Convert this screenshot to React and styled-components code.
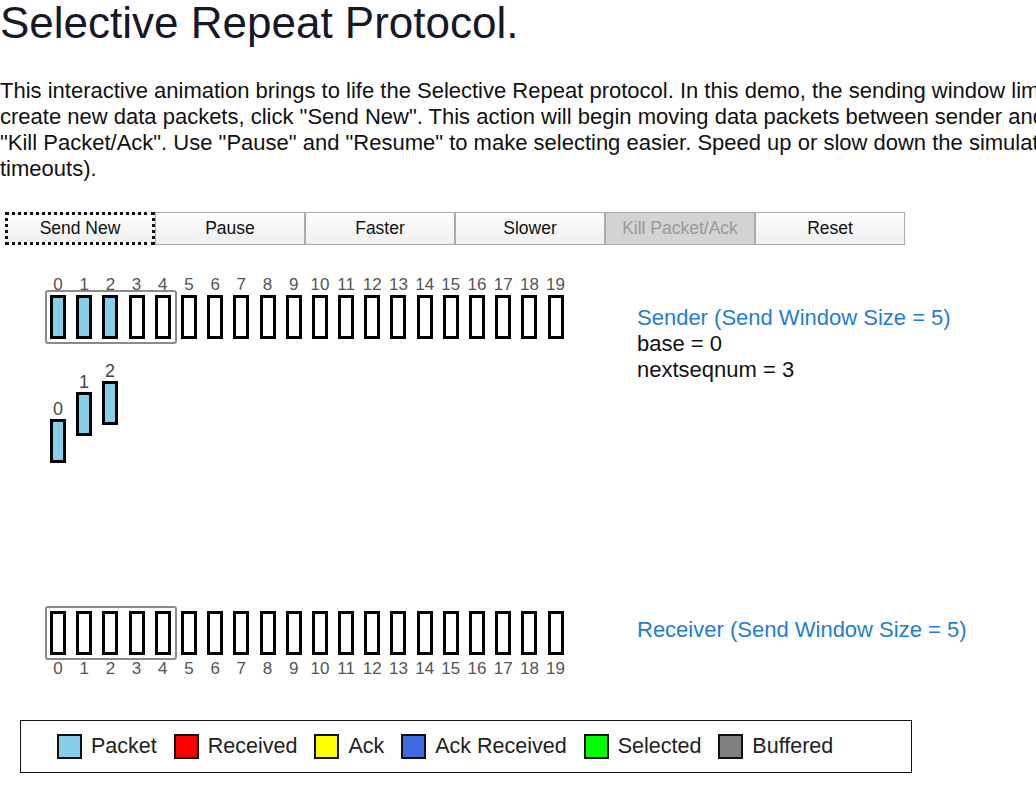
import React from "react";
import styled, { createGlobalStyle } from "styled-components";

const Global = createGlobalStyle`
  html, body { margin: 0; padding: 0; background: #fff; overflow: hidden; }
  body { font-family: "Liberation Sans", Arial, sans-serif; color: #111; }
`;

const Page = styled.div`
  width: 1036px;
  display: flex;
  flex-direction: column;
`;

const Title = styled.h1`
  margin: 0;
  font-size: 44px;
  line-height: 46px;
  font-weight: 400;
  color: #17172a;
  white-space: nowrap;
`;

const Intro = styled.p`
  margin: 32px 0 0;
  font-size: 22px;
  line-height: 26px;
  color: #111;
`;

const Line = styled.span`
  display: block;
  white-space: nowrap;
`;

const Toolbar = styled.div`
  display: flex;
  margin: 30px 0 0 5px;
`;

const Button = styled.button`
  width: 150px;
  height: 33px;
  box-sizing: border-box;
  margin: 0;
  padding: 0;
  font-family: "Liberation Sans", Arial, sans-serif;
  font-size: 17.5px;
  color: ${(p) => (p.disabled ? "#9a9a9a" : "#111")};
  background: ${(p) =>
    p.disabled ? "#d3d3d3" : "linear-gradient(#fdfdfd, #efefef)"};
  border: ${(p) => (p.focused ? "3px dotted #111" : "1px solid #ababab")};
  cursor: default;
`;

const Sim = styled.div`
  margin-top: 31px;
  padding-left: 45px;
  display: flex;
  flex-direction: column;
`;

const Row = styled.div`
  display: flex;
  align-items: flex-start;
`;

const Track = styled.div`
  width: 592px;
  display: flex;
  flex-direction: column;
`;

const Numbers = styled.div`
  display: flex;
  gap: 10.2px;
  padding-left: 5px;
  height: 18px;
  margin: ${(p) => (p.below ? "0" : "0 0 -4px")};
  position: relative;
  z-index: 1;
`;

const Num = styled.span`
  width: 16px;
  display: flex;
  justify-content: center;
  white-space: nowrap;
  font-size: 17px;
  line-height: 18px;
  color: #555;
`;

const Slots = styled.div`
  position: relative;
  display: flex;
  gap: 10.2px;
  padding: 5px 0 5px 5px;
`;

const WindowFrame = styled.div`
  position: absolute;
  left: 0;
  top: 0;
  width: 132px;
  height: 54px;
  box-sizing: border-box;
  border: 2px solid #8a8a8a;
  border-radius: 3px;
`;

const Slot = styled.div`
  width: 16px;
  height: 44px;
  box-sizing: border-box;
  border: 3px solid #000;
  background: ${(p) => p.fill || "#fff"};
`;

const Info = styled.div`
  margin-top: ${(p) => p.offset}px;
  font-size: 22px;
  line-height: 26px;
  color: #111;
  white-space: nowrap;
`;

const InfoTitle = styled.div`
  color: #1f7dd6;
`;

const Flight = styled.div`
  position: relative;
  height: 223px;
`;

const Packet = styled.div`
  position: absolute;
  display: flex;
  flex-direction: column;
  align-items: center;
  width: 16px;
`;

const PacketLabel = styled.span`
  font-size: 18px;
  line-height: 18px;
  height: 18px;
  margin-bottom: 1px;
  color: #444;
`;

const Legend = styled.div`
  margin: 42px 0 0 20px;
  width: 892px;
  height: 53px;
  box-sizing: border-box;
  border: 1px solid #111;
  display: flex;
  align-items: center;
  padding-left: 36px;
  gap: 17px;
`;

const LegendItem = styled.div`
  display: flex;
  align-items: center;
  gap: 9px;
  font-size: 21.5px;
  color: #222;
`;

const Swatch = styled.span`
  width: 25px;
  height: 25px;
  box-sizing: border-box;
  border: 2px solid #111;
  background: ${(p) => p.color};
`;

const SKY = "#87ceeb";
const idx = Array.from({ length: 20 }, (_, i) => i);

const legend = [
  ["Packet", SKY],
  ["Received", "#ff0000"],
  ["Ack", "#ffff00"],
  ["Ack Received", "#4169e1"],
  ["Selected", "#00ff00"],
  ["Buffered", "#808080"],
];

const flight = [
  { n: 0, left: 5, top: 17 },
  { n: 1, left: 31, top: -10 },
  { n: 2, left: 57, top: -21 },
];

const buttons = ["Send New", "Pause", "Faster", "Slower", "Kill Packet/Ack", "Reset"];

export default function App() {
  return (
    <Page>
      <Global />
      <Title>Selective Repeat Protocol.</Title>
      <Intro>
        <Line>
          This interactive animation brings to life the Selective Repeat protocol. In this demo, the sending window limits the number of packets in flight. To
        </Line>
        <Line>
          create new data packets, click "Send New". This action will begin moving data packets between sender and receiver. To lose a packet, select it and click
        </Line>
        <Line>
          "Kill Packet/Ack". Use "Pause" and "Resume" to make selecting easier. Speed up or slow down the simulation with "Faster" and "Slower" (also affects
        </Line>
        <Line>timeouts).</Line>
      </Intro>
      <Toolbar>
        {buttons.map((b, i) => (
          <Button key={b} focused={i === 0} disabled={b === "Kill Packet/Ack"}>
            {b}
          </Button>
        ))}
      </Toolbar>
      <Sim>
        <Row>
          <Track>
            <Numbers>
              {idx.map((i) => (
                <Num key={i}>{i}</Num>
              ))}
            </Numbers>
            <Slots>
              <WindowFrame />
              {idx.map((i) => (
                <Slot key={i} fill={i < 3 ? SKY : undefined} />
              ))}
            </Slots>
          </Track>
          <Info offset={29}>
            <InfoTitle>Sender (Send Window Size = 5)</InfoTitle>
            <div>base = 0</div>
            <div>nextseqnum = 3</div>
          </Info>
        </Row>
        <Flight>
          {flight.map((p) => (
            <Packet key={p.n} style={{ left: p.left, top: p.top }}>
              <PacketLabel>{p.n}</PacketLabel>
              <Slot fill={SKY} />
            </Packet>
          ))}
        </Flight>
        <Row>
          <Track>
            <Slots>
              <WindowFrame />
              {idx.map((i) => (
                <Slot key={i} />
              ))}
            </Slots>
            <Numbers below>
              {idx.map((i) => (
                <Num key={i}>{i}</Num>
              ))}
            </Numbers>
          </Track>
          <Info offset={11}>
            <InfoTitle>Receiver (Send Window Size = 5)</InfoTitle>
          </Info>
        </Row>
      </Sim>
      <Legend>
        {legend.map(([label, color]) => (
          <LegendItem key={label}>
            <Swatch color={color} />
            {label}
          </LegendItem>
        ))}
      </Legend>
    </Page>
  );
}
